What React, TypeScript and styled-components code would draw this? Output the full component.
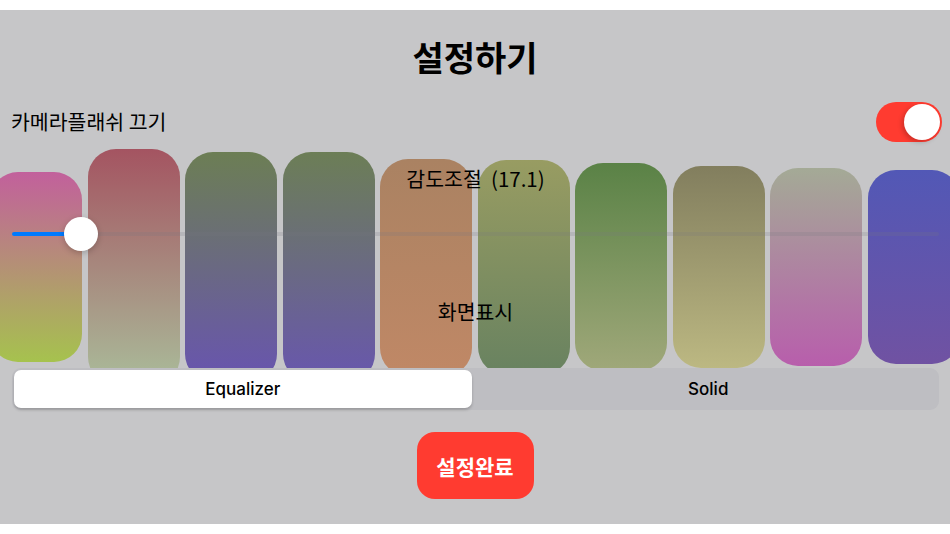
import styled, { createGlobalStyle } from 'styled-components';

const GlobalStyle = createGlobalStyle`
    html, body {
        margin: 0;
        padding: 0;
        background: #ffffff;
    }
    body {
        font-family: 'Inter', 'Noto Sans CJK KR', sans-serif;
        color: #000;
    }
`;

type Bar = { height: number; from: string; to: string };

// 이퀄라이저 막대 (배경)
const bars: Bar[] = [
    { height: 190, from: '#c2609c', to: '#a6c24e' },
    { height: 236, from: '#a45461', to: '#aabc9a' },
    { height: 230, from: '#6c7e54', to: '#6854b0' },
    { height: 230, from: '#6c7e56', to: '#6856ae' },
    { height: 217, from: '#aa8262', to: '#c08866' },
    { height: 215, from: '#989c62', to: '#688260' },
    { height: 208, from: '#5a8246', to: '#a0a87a' },
    { height: 202, from: '#827e5e', to: '#bcb882' },
    { height: 198, from: '#a4aa96', to: '#b85eac' },
    { height: 194, from: '#5258b6', to: '#7052a2' },
];

const sensitivity = 17.1;
const sliderRatio = 0.074;

function App(): JSX.Element {
    return (
        <>
            <GlobalStyle />
            <S_Panel>
                <S_Title>설정하기</S_Title>
                <S_FlashRow>
                    <S_RowLabel>카메라플래쉬 끄기</S_RowLabel>
                    <S_Switch $on>
                        <S_SwitchKnob />
                    </S_Switch>
                </S_FlashRow>
                <S_Stage>
                    <S_BarsLayer>
                        {bars.map((bar, i) => (
                            <S_Bar key={i} $height={bar.height} $from={bar.from} $to={bar.to} />
                        ))}
                    </S_BarsLayer>
                    <S_ControlsLayer>
                        <S_Label>감도조절&nbsp;&nbsp;({sensitivity})</S_Label>
                        <S_Slider>
                            <S_SliderFill style={{ width: `${sliderRatio * 100}%` }} />
                            <S_SliderThumb />
                            <S_SliderRest />
                        </S_Slider>
                        <S_DisplayLabel>화면표시</S_DisplayLabel>
                        <S_Segmented>
                            <S_Segment $selected>Equalizer</S_Segment>
                            <S_Segment>Solid</S_Segment>
                        </S_Segmented>
                    </S_ControlsLayer>
                </S_Stage>
                <S_ButtonRow>
                    <S_DoneButton>설정완료</S_DoneButton>
                </S_ButtonRow>
            </S_Panel>
        </>
    );
}
export default App;

const S_Panel = styled.main`
    margin-top: 10px;
    width: 950px;
    height: 514px;
    background-color: #c6c6c8;
    display: flex;
    flex-direction: column;
    overflow: hidden;
`;
const S_Title = styled.h1`
    margin: 27px 0 0;
    height: 40px;
    line-height: 40px;
    text-align: center;
    font-family: 'Noto Sans CJK KR', sans-serif;
    font-size: 34px;
    font-weight: 700;
`;
const S_FlashRow = styled.div`
    margin-top: 25px;
    height: 40px;
    display: flex;
    align-items: center;
    justify-content: space-between;
    padding: 0 8px 0 11px;
`;
const S_RowLabel = styled.span`
    font-family: 'Noto Sans CJK KR', sans-serif;
    font-size: 20.5px;
    line-height: 30px;
    margin-top: -2px;
`;
const S_Switch = styled.div<{ $on?: boolean }>`
    width: 66px;
    height: 40px;
    border-radius: 20px;
    background-color: ${(p) => (p.$on ? '#ff3b30' : '#e5e5ea')};
    display: flex;
    align-items: center;
    justify-content: ${(p) => (p.$on ? 'flex-end' : 'flex-start')};
    padding: 0 2px;
    box-sizing: border-box;
`;
const S_SwitchKnob = styled.div`
    width: 36px;
    height: 36px;
    border-radius: 50%;
    background: #fff;
    box-shadow: -2px 2px 5px rgba(0, 0, 0, 0.2);
`;
const S_Stage = styled.section`
    margin-top: 3px;
    display: grid;
    grid-template: 1fr / 1fr;
`;
const S_BarsLayer = styled.div`
    grid-area: 1 / 1;
    display: flex;
    justify-content: center;
    align-items: center;
    gap: 5.5px;
    padding-bottom: 21px;
    overflow: hidden;
`;
const S_Bar = styled.div<{ $height: number; $from: string; $to: string }>`
    flex: 0 0 92px;
    height: ${(p) => p.$height}px;
    border-radius: 28px;
    background: linear-gradient(to bottom, ${(p) => p.$from}, ${(p) => p.$to});
`;
const S_ControlsLayer = styled.div`
    grid-area: 1 / 1;
    z-index: 1;
    display: flex;
    flex-direction: column;
    padding: 18px 11px 0 12px;
`;
const S_Label = styled.div`
    height: 30px;
    line-height: 30px;
    text-align: center;
    font-family: 'Noto Sans CJK KR', sans-serif;
    font-size: 20.5px;
`;
const S_DisplayLabel = styled(S_Label)`
    margin-top: 45px;
`;
const S_Slider = styled.div`
    margin-top: 24px;
    height: 34px;
    display: flex;
    align-items: center;
`;
const S_SliderFill = styled.div`
    height: 4px;
    border-radius: 2px 0 0 2px;
    background: #007aff;
`;
const S_SliderThumb = styled.div`
    flex: 0 0 34px;
    height: 34px;
    margin: 0 -17px;
    border-radius: 50%;
    background: #fff;
    box-shadow: 0 2px 6px rgba(0, 0, 0, 0.22);
    position: relative;
    z-index: 1;
`;
const S_SliderRest = styled.div`
    flex: 1;
    height: 4px;
    border-radius: 0 2px 2px 0;
    background: rgba(120, 120, 128, 0.2);
`;
const S_Segmented = styled.div`
    margin-top: 42px;
    height: 42px;
    display: grid;
    grid-template-columns: 1fr 1fr;
    column-gap: 8px;
    padding: 2px;
    box-sizing: border-box;
    border-radius: 9px;
    background: #bebec2;
`;
const S_Segment = styled.div<{ $selected?: boolean }>`
    display: flex;
    align-items: center;
    justify-content: center;
    border-radius: 7px;
    font-size: 17px;
    font-weight: 500;
    background: ${(p) => (p.$selected ? '#ffffff' : 'transparent')};
    box-shadow: ${(p) => (p.$selected ? '0 2px 3px rgba(0, 0, 0, 0.2)' : 'none')};
`;
const S_ButtonRow = styled.div`
    margin-top: 22px;
    display: flex;
    justify-content: center;
`;
const S_DoneButton = styled.button`
    width: 117px;
    height: 67px;
    border: none;
    border-radius: 18px;
    background: #ff3b30;
    color: #fff;
    font-family: 'Noto Sans CJK KR', sans-serif;
    font-size: 21px;
    font-weight: 700;
    cursor: pointer;
`;
